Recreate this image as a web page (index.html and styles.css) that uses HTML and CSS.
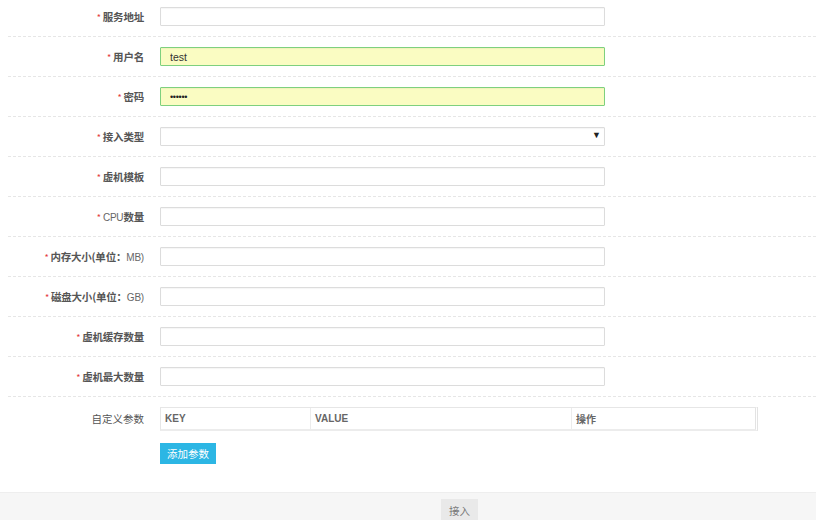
FILE: index.html
```html
<!DOCTYPE html>
<html lang="zh">
<head>
<meta charset="utf-8">
<title>接入</title>
<link rel="stylesheet" href="styles.css">
</head>
<body>
<div class="page">
  <form class="form">
    <div class="row"><label class="lbl"><span class="req">*</span>服务地址</label><div class="ctl"><input class="inp" type="text"></div></div>
    <div class="row"><label class="lbl"><span class="req">*</span>用户名</label><div class="ctl"><input class="inp filled" type="text" value="test"></div></div>
    <div class="row"><label class="lbl"><span class="req">*</span>密码</label><div class="ctl"><input class="inp filled pw" type="text" value="••••••"></div></div>
    <div class="row"><label class="lbl"><span class="req">*</span>接入类型</label><div class="ctl"><div class="inp sel"><span class="arrow">▼</span></div></div></div>
    <div class="row"><label class="lbl"><span class="req">*</span>虚机模板</label><div class="ctl"><input class="inp" type="text"></div></div>
    <div class="row"><label class="lbl"><span class="req">*</span><span class="lat">CPU</span>数量</label><div class="ctl"><input class="inp" type="text"></div></div>
    <div class="row"><label class="lbl"><span class="req">*</span>内存大小(单位：<span class="lat">MB)</span></label><div class="ctl"><input class="inp" type="text"></div></div>
    <div class="row"><label class="lbl"><span class="req">*</span>磁盘大小(单位：<span class="lat">GB)</span></label><div class="ctl"><input class="inp" type="text"></div></div>
    <div class="row"><label class="lbl"><span class="req">*</span>虚机缓存数量</label><div class="ctl"><input class="inp" type="text"></div></div>
    <div class="row"><label class="lbl"><span class="req">*</span>虚机最大数量</label><div class="ctl"><input class="inp" type="text"></div></div>
    <div class="row last">
      <label class="lbl plain">自定义参数</label>
      <div class="ctl">
        <table class="params">
          <thead><tr><th class="c-key">KEY</th><th class="c-val">VALUE</th><th class="c-op">操作</th></tr></thead>
        </table>
        <button type="button" class="btn-add">添加参数</button>
      </div>
    </div>
  </form>
  <div class="footer"><button type="button" class="btn-submit">接入</button></div>
</div>
</body>
</html>
```

FILE: styles.css
```css
html, body { margin: 0; padding: 0; background: #fff; }
body {
  font-family: "Noto Sans CJK SC", "Liberation Sans", sans-serif;
  font-size: 10.5px;
  color: #555;
  width: 816px;
  height: 520px;
  overflow: hidden;
}
.page { display: flex; flex-direction: column; }
.form { margin-top: -3px; padding-left: 8px; }
.row {
  display: flex;
  align-items: flex-start;
  padding: 10px 0;
  height: 19px;
  border-bottom: 1px dashed #e6e6e6;
}
.row.last { height: auto; border-bottom: 0; padding-bottom: 28px; }
.lbl {
  width: 136px;
  flex: none;
  text-align: right;
  font-weight: bold;
  line-height: 19px;
  color: #555;
  white-space: nowrap;
  letter-spacing: -0.2px;
}
.lat { font-weight: normal; font-family: "Liberation Sans", sans-serif; font-size: 10px; color: #666; }
.lbl.plain { font-weight: normal; line-height: 24px; letter-spacing: 0; }
.req { color: #e4393c; font-weight: normal; margin-right: 2px; font-size: 9px; }
.ctl { margin-left: 16px; flex: none; display: flex; flex-direction: column; align-items: flex-start; }
.inp {
  box-sizing: border-box;
  width: 445px;
  height: 19px;
  margin: 0;
  padding: 0 9px;
  border: 1px solid #dcdcdc;
  border-radius: 1px;
  box-shadow: inset 0 1px 1px rgba(0,0,0,0.04);
  background: #fff;
  font-family: "Liberation Sans", "Noto Sans CJK SC", sans-serif;
  font-size: 10.5px;
  color: #333;
  outline: none;
}
.inp.filled { background: #fafcc2; border-color: #7ed07e; }
.inp.pw { font-size: 9px; letter-spacing: -0.3px; color: #222; }
.sel { position: relative; }
.arrow { position: absolute; right: 3px; top: 2px; font-size: 9px; color: #222; }
.params {
  width: 598px;
  border-collapse: separate;
  border-spacing: 0;
  border: 1px solid #e6e6e6;
  border-right: 3px double #e3e3e3;
  border-bottom: 2px solid #ececec;
}
.params th {
  text-align: left;
  font-weight: bold;
  font-size: 10px;
  color: #666;
  height: 21px;
  padding: 0 4px;
  font-family: "Liberation Sans", "Noto Sans CJK SC", sans-serif;
}
.c-key { width: 141px; border-right: 1px solid #ececec; }
.c-val { width: 252px; border-right: 1px solid #ececec; }
.btn-add {
  margin-top: 12px;
  width: 56px;
  height: 21px;
  border: 0;
  background: #2cb6e4;
  color: #fff;
  font-family: "Noto Sans CJK SC", sans-serif;
  font-size: 10.5px;
  padding: 0;
  cursor: pointer;
}
.footer {
  height: 29px;
  background: #f6f6f6;
  border-top: 1px solid #eeeeee;
  display: flex;
  justify-content: flex-start;
  padding-top: 6px;
  padding-left: 441px;
}
.btn-submit {
  width: 37px;
  height: 23px;
  border: 0;
  background: #e9e9e9;
  color: #777;
  font-family: "Noto Sans CJK SC", sans-serif;
  font-size: 10.5px;
  padding: 0;
}
```
